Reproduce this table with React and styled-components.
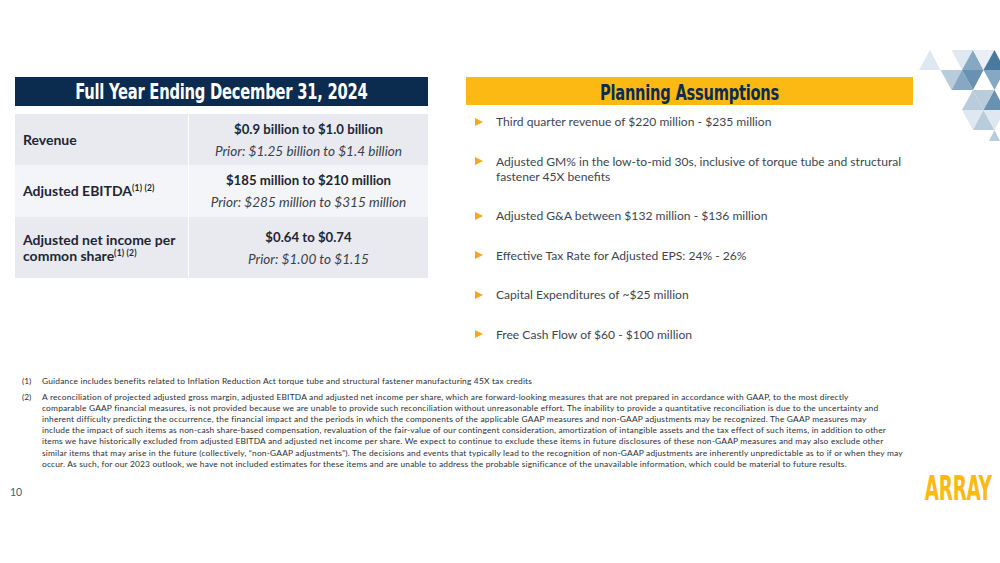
import React from "react";
import styled, { createGlobalStyle } from "styled-components";

const Global = createGlobalStyle`
  html, body { margin: 0; padding: 0; background: #fff; }
  body { font-family: Lato, "Open Sans", sans-serif; }
`;

const Page = styled.div`
  position: relative;
  width: 1000px;
  height: 563px;
  overflow: hidden;
  background: #fff;
  display: flex;
  flex-direction: column;
`;

const Top = styled.div`
  display: flex;
  align-items: flex-start;
  padding-top: 77px;
  padding-left: 15px;
  gap: 38px;
`;

const LeftCol = styled.div`
  width: 413px;
  display: flex;
  flex-direction: column;
  gap: 8px;
`;

const Banner = styled.div`
  height: ${(p) => p.$h}px;
  background: ${(p) => p.$bg};
  color: ${(p) => p.$fg};
  display: flex;
  align-items: center;
  justify-content: center;
  overflow: hidden;
`;

const BannerText = styled.span`
  display: inline-block;
  font-family: "DejaVu Sans Condensed", "DejaVu Sans", sans-serif;
  font-stretch: condensed;
  font-weight: bold;
  font-size: ${(p) => p.$size}px;
  letter-spacing: -0.3px;
  transform: scaleX(${(p) => p.$sx});
  white-space: nowrap;
  margin-top: ${(p) => p.$dy || 0}px;
`;

const Table = styled.div`
  display: grid;
  grid-template-columns: 173px 1fr;
  column-gap: 1px;
  background: #fff;
`;

const Cell = styled.div`
  background: ${(p) => (p.$alt ? "#f4f5f8" : "#e9eaf0")};
  height: ${(p) => p.$h}px;
  display: flex;
  flex-direction: column;
  justify-content: center;
  align-items: ${(p) => (p.$center ? "center" : "flex-start")};
  padding: 0 ${(p) => (p.$center ? 0 : 8)}px;
  box-sizing: border-box;
`;

const Label = styled.div`
  font-weight: 700;
  font-size: 14px;
  line-height: 16px;
  color: #1d2636;
  sup {
    font-size: 8.5px;
    vertical-align: 5px;
    line-height: 0;
    letter-spacing: 0.2px;
  }
`;

const Value = styled.div`
  font-weight: 700;
  font-size: 13.2px;
  line-height: 16px;
  color: #1d2636;
`;

const Prior = styled.div`
  font-style: italic;
  font-size: 13.6px;
  line-height: 16px;
  margin-top: 6px;
  color: #3a414c;
`;

const RightCol = styled.div`
  width: 447px;
  display: flex;
  flex-direction: column;
`;

const Bullets = styled.ul`
  list-style: none;
  margin: 9px 0 0 0;
  padding: 0 0 0 9px;
  display: flex;
  flex-direction: column;
  gap: 24.5px;
`;

const Item = styled.li`
  display: flex;
  gap: 13px;
  font-size: 12.1px;
  line-height: 15px;
  color: #3d4550;
  white-space: nowrap;
`;

const Arrow = styled.span`
  flex: none;
  width: 0;
  height: 0;
  margin-top: 3.5px;
  border-top: 4px solid transparent;
  border-bottom: 4px solid transparent;
  border-left: 8px solid #f6a81c;
`;

const Notes = styled.div`
  margin-top: 34px;
  padding-left: 22px;
  display: flex;
  flex-direction: column;
  gap: 5.5px;
`;

const Note = styled.div`
  display: flex;
  font-size: 8.4px;
  letter-spacing: 0.19px;
  line-height: 11.1px;
  color: #2a2f36;
`;

const NoteNum = styled.span`
  flex: none;
  width: 20px;
  letter-spacing: 0;
`;

const NoteLine = styled.div`
  white-space: nowrap;
`;

const Bottom = styled.div`
  display: flex;
  justify-content: space-between;
  align-items: flex-start;
  padding: 0 8px 0 10px;
  margin-top: 2px;
`;

const PageNum = styled.div`
  font-size: 10.5px;
  color: #3e5d7e;
  margin-top: 14px;
`;

const Logo = styled.div`
  font-family: "DejaVu Sans Condensed", "DejaVu Sans", sans-serif;
  font-stretch: condensed;
  font-weight: bold;
  font-size: 33px;
  line-height: 33px;
  color: #fdb913;
  transform: scaleX(0.62);
  transform-origin: right center;
  letter-spacing: -0.5px;
`;

const Deco = styled.svg`
  position: absolute;
  left: 908px;
  top: 50px;
`;

const P = "#dfe8f1";
const L = "#b8ccdc";
const M = "#86a8c3";
const MD = "#6891b2";
const D = "#4a799f";

const tris = [
  ["930,50 919,70 940.5,70", P],
  ["951.5,50 973,50 962,70", P],
  ["973,50 962,70 983.5,70", M],
  ["973,50 994.5,50 983.5,70", "#e9eff5"],
  ["994.5,50 983.5,70 1005,70", D],
  ["940.5,70 962,70 951.5,90", L],
  ["962,70 951.5,90 973,90", M],
  ["962,70 983.5,70 973,90", MD],
  ["983.5,70 1005,70 994.5,90", M],
  ["973,90 962,110 983.5,110", L],
  ["973,90 994.5,90 983.5,110", L],
  ["994.5,90 983.5,110 1005,110", MD],
  ["962,110 983.5,110 973,130", P],
  ["983.5,110 973,130 994.5,130", L],
  ["983.5,110 1005,110 994.5,130", P],
  ["994.5,130 989,141 1000,141", L],
];

const rows = [
  {
    label: <>Revenue</>,
    value: "$0.9 billion to $1.0 billion",
    prior: "Prior: $1.25 billion to $1.4 billion",
    h: 51,
  },
  {
    label: (
      <>
        Adjusted EBITDA<sup>(1) (2)</sup>
      </>
    ),
    value: "$185 million to $210 million",
    prior: "Prior: $285 million to $315 million",
    h: 52,
    alt: true,
  },
  {
    label: (
      <>
        Adjusted net income per
        <br />
        common share<sup>(1) (2)</sup>
      </>
    ),
    value: "$0.64 to $0.74",
    prior: "Prior: $1.00 to $1.15",
    h: 61,
  },
];

const bullets = [
  ["Third quarter revenue of $220 million - $235 million"],
  [
    "Adjusted GM% in the low-to-mid 30s, inclusive of torque tube and structural",
    "fastener 45X benefits",
  ],
  ["Adjusted G&A between $132 million - $136 million"],
  ["Effective Tax Rate for Adjusted EPS: 24% - 26%"],
  ["Capital Expenditures of ~$25 million"],
  ["Free Cash Flow of $60 - $100 million"],
];

const note2 = [
  "A reconciliation of projected adjusted gross margin, adjusted EBITDA and adjusted net income per share, which are forward-looking measures that are not prepared in accordance with GAAP, to the most directly",
  "comparable GAAP financial measures, is not provided because we are unable to provide such reconciliation without unreasonable effort. The inability to provide a quantitative reconciliation is due to the uncertainty and",
  "inherent difficulty predicting the occurrence, the financial impact and the periods in which the components of the applicable GAAP measures and non-GAAP adjustments may be recognized. The GAAP measures may",
  "include the impact of such items as non-cash share-based compensation, revaluation of the fair-value of our contingent consideration, amortization of intangible assets and the tax effect of such items, in addition to other",
  "items we have historically excluded from adjusted EBITDA and adjusted net income per share. We expect to continue to exclude these items in future disclosures of these non-GAAP measures and may also exclude other",
  "similar items that may arise in the future (collectively, \u201cnon-GAAP adjustments\u201d). The decisions and events that typically lead to the recognition of non-GAAP adjustments are inherently unpredictable as to if or when they may",
  "occur. As such, for our 2023 outlook, we have not included estimates for these items and are unable to address the probable significance of the unavailable information, which could be material to future results.",
];

export default function App() {
  return (
    <>
      <Global />
      <Page>
        <Deco width="92" height="100" viewBox="908 50 92 100">
          {tris.map(([pts, c], i) => (
            <polygon key={i} points={pts} fill={c} />
          ))}
        </Deco>
        <Top>
          <LeftCol>
            <Banner $h={29} $bg="#0c2c4f" $fg="#fff">
              <BannerText $size={21} $sx={0.78}>
                Full Year Ending December 31, 2024
              </BannerText>
            </Banner>
            <Table>
              {rows.map((r, i) => (
                <React.Fragment key={i}>
                  <Cell $h={r.h} $alt={r.alt}>
                    <Label>{r.label}</Label>
                  </Cell>
                  <Cell $h={r.h} $alt={r.alt} $center>
                    <Value>{r.value}</Value>
                    <Prior>{r.prior}</Prior>
                  </Cell>
                </React.Fragment>
              ))}
            </Table>
          </LeftCol>
          <RightCol>
            <Banner $h={28} $bg="#fdb913" $fg="#0c2c4f">
              <BannerText $size={21} $sx={0.775} $dy={3}>
                Planning Assumptions
              </BannerText>
            </Banner>
            <Bullets>
              {bullets.map((lines, i) => (
                <Item key={i}>
                  <Arrow />
                  <div>
                    {lines.map((l, j) => (
                      <div key={j}>{l}</div>
                    ))}
                  </div>
                </Item>
              ))}
            </Bullets>
          </RightCol>
        </Top>
        <Notes>
          <Note>
            <NoteNum>(1)</NoteNum>
            <NoteLine>
              Guidance includes benefits related to Inflation Reduction Act torque tube and structural
              fastener manufacturing 45X tax credits
            </NoteLine>
          </Note>
          <Note>
            <NoteNum>(2)</NoteNum>
            <div>
              {note2.map((l, i) => (
                <NoteLine key={i}>{l}</NoteLine>
              ))}
            </div>
          </Note>
        </Notes>
        <Bottom>
          <PageNum>10</PageNum>
          <Logo>ARRAY</Logo>
        </Bottom>
      </Page>
    </>
  );
}
